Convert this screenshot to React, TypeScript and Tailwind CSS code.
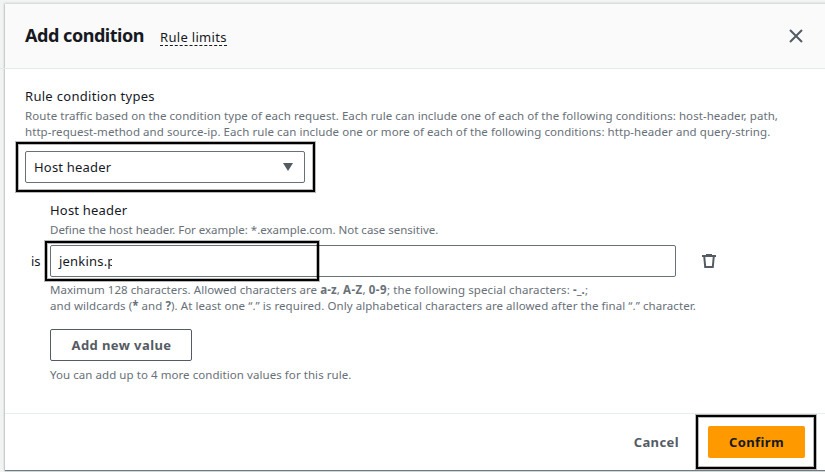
import type { ReactNode } from "react";

function Highlight({ className }: { className: string }) {
  return (
    <div
      className={`pointer-events-none absolute border-2 border-black shadow-[0_0_0_1px_#00000048,inset_0_0_0_1px_#00000048] ${className}`}
    />
  );
}

function Hint({ children, className = "tracking-[0.067px]" }: { children: ReactNode; className?: string }) {
  return <p className={`text-[11.5px] leading-4 whitespace-nowrap text-[#687078] ${className}`}>{children}</p>;
}

function CloseIcon() {
  return (
    <svg width="16" height="16" viewBox="0 0 16 16" fill="none" stroke="#545b64" strokeWidth="2">
      <path d="M2 2l12 12M14 2L2 14" />
    </svg>
  );
}

function TrashIcon() {
  return (
    <svg width="16" height="16" viewBox="0 0 16 16" fill="none" stroke="#545b64" strokeWidth="2">
      <path d="M1 3h14M5 2h6" />
      <path d="M3.2 3l1 11h7.6l1-11" />
    </svg>
  );
}

export default function App() {
  return (
    <div className="relative h-[472px] w-[825px] overflow-hidden bg-[#f2f3f3] pt-1 pl-[5px] font-['Noto_Sans',sans-serif] text-[13px] text-[#16191f]">
      <div className="absolute top-[68px] left-0 h-px w-[5px] bg-[#e3e8e8]" />
      <section className="flex h-[466px] w-[840px] flex-col bg-white shadow-[0_1px_1px_0_rgba(0,28,36,0.5),0_0_2px_1px_rgba(0,28,36,0.15)]">
        <header className="flex h-[65px] items-center border-b border-[#e3e8e8] bg-[#fafafa] pr-[41px] pl-5">
          <h1 className="-mt-0.5 text-[18px] leading-[22px] font-bold tracking-[-0.46px]">Add condition</h1>
          <a className="mt-[3px] ml-4 border-b border-dashed border-[#16191f] leading-[16px] tracking-[0.3px]">Rule limits</a>
          <button className="ml-auto" aria-label="Close">
            <CloseIcon />
          </button>
        </header>

        <main className="flex h-[344px] flex-col pt-4 pl-5">
          <label className="mb-px leading-[22px] tracking-[0.3px]">Rule condition types</label>
          <Hint>Route traffic based on the condition type of each request. Each rule can include one of each of the following conditions: host-header, path,</Hint>
          <Hint>http-request-method and source-ip. Each rule can include one or more of each of the following conditions: http-header and query-string.</Hint>
          <div className="mt-[11px] flex h-8 w-[280px] items-center justify-between rounded-[2px] border border-[#687078] px-2">
            <span className="pt-0.5 tracking-[0.2px]">Host header</span>
            <svg width="16" height="16" viewBox="0 0 16 16" fill="#545b64">
              <path d="M3 4h10L8 12z" />
            </svg>
          </div>

          <div className="mt-4 flex flex-col pl-[25px]">
            <label className="leading-[22px] tracking-[0.2px]">Host header</label>
            <Hint className="mt-px tracking-[-0.01px]">Define the host header. For example: *.example.com. Not case sensitive.</Hint>
            <div className="mt-[7px] -ml-[19px] flex h-8 items-center">
              <span className="w-[19px] pt-0.5">is</span>
              <div className="relative flex h-8 w-[626px] items-center rounded-[2px] border border-[#687078] px-2">
                <span className="pt-0.5 tracking-[0.2px] whitespace-nowrap">jenkins.p</span>
                <span className="absolute top-1 left-[61px] h-[22px] w-4 bg-white" />
              </div>
              <button className="ml-[25px]" aria-label="Remove">
                <TrashIcon />
              </button>
            </div>
            <Hint className="mt-[5px] tracking-[0.11px]">
              <span className="tracking-[0.04px]">Maximum 128 characters. Allowed characters are </span>
              <b>a-z</b>, <b className="tracking-[0.4px]">A-Z</b>, <b className="tracking-[0.4px]">0-9</b>; the following special characters: <b>-_.</b>;
            </Hint>
            <Hint>
              and wildcards (<b>*</b> and <b>?</b>). At least one “.” is required. Only alphabetical characters are allowed after the final “.” character.
            </Hint>
            <button className="mt-[15px] flex h-8 w-[142px] items-center justify-center rounded-[2px] border border-[#545b64] pt-0.5 pl-px font-bold tracking-[0.42px] whitespace-nowrap text-[#545b64]">
              Add new value
            </button>
            <Hint className="mt-[6px] tracking-[0.06px]">You can add up to 4 more condition values for this rule.</Hint>
          </div>
        </main>

        <footer className="flex h-[57px] items-center justify-end border-t border-[#eaeded] pr-10">
          <button className="mr-[29px] pt-0.5 font-bold tracking-[0.4px] text-[#545b64]">Cancel</button>
          <button className="h-8 w-[97px] rounded-[2px] bg-[#ff9900] pt-0.5 font-bold tracking-[0.4px] text-[#16191f]">Confirm</button>
        </footer>
      </section>

      <Highlight className="top-[142px] left-4 h-[50px] w-[299px]" />
      <Highlight className="top-[241px] left-[45px] h-[40px] w-[274px]" />
      <Highlight className="top-[415px] left-[696px] h-[54px] w-[120px]" />
    </div>
  );
}
